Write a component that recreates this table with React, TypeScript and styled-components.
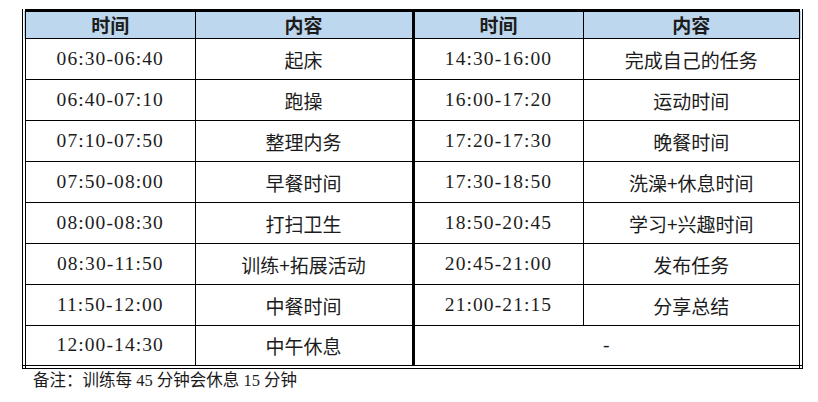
import React from 'react'
import styled, { createGlobalStyle } from 'styled-components'

type Slot = { time: string; task: string }

const morning: Slot[] = [
  { time: '06:30-06:40', task: '起床' },
  { time: '06:40-07:10', task: '跑操' },
  { time: '07:10-07:50', task: '整理内务' },
  { time: '07:50-08:00', task: '早餐时间' },
  { time: '08:00-08:30', task: '打扫卫生' },
  { time: '08:30-11:50', task: '训练+拓展活动' },
  { time: '11:50-12:00', task: '中餐时间' },
  { time: '12:00-14:30', task: '中午休息' },
]

const afternoon: Slot[] = [
  { time: '14:30-16:00', task: '完成自己的任务' },
  { time: '16:00-17:20', task: '运动时间' },
  { time: '17:20-17:30', task: '晚餐时间' },
  { time: '17:30-18:50', task: '洗澡+休息时间' },
  { time: '18:50-20:45', task: '学习+兴趣时间' },
  { time: '20:45-21:00', task: '发布任务' },
  { time: '21:00-21:15', task: '分享总结' },
]

const App = () => {
  return (
    <Page>
      <GlobalStyle />
      <Schedule>
        <colgroup>
          <col style={{ width: 171 }} />
          <col style={{ width: 218 }} />
          <col style={{ width: 170 }} />
          <col style={{ width: 218 }} />
        </colgroup>
        <thead>
          <tr>
            <HeadCell>时间</HeadCell>
            <HeadCell>内容</HeadCell>
            <HeadCell $split>时间</HeadCell>
            <HeadCell>内容</HeadCell>
          </tr>
        </thead>
        <tbody>
          {morning.map((slot, i) => {
            const other = afternoon[i]
            return (
              <Row key={slot.time}>
                <TimeCell>{slot.time}</TimeCell>
                <TaskCell>{slot.task}</TaskCell>
                {other ? (
                  <>
                    <TimeCell $split>{other.time}</TimeCell>
                    <TaskCell>{other.task}</TaskCell>
                  </>
                ) : (
                  <TimeCell $split colSpan={2}>
                    -
                  </TimeCell>
                )}
              </Row>
            )
          })}
        </tbody>
      </Schedule>
      <Note>备注：训练每 45 分钟会休息 15 分钟</Note>
    </Page>
  )
}

export default App

const GlobalStyle = createGlobalStyle`
  body {
    margin: 0;
    background: #fff;
  }
`

const Page = styled.div`
  padding: 9px 0 0 22px;
  color: #1c1c1c;
`

const Schedule = styled.table`
  width: 778px;
  table-layout: fixed;
  border-collapse: collapse;
  border: 4px double #000;
  border-top: 3px solid #000;
`

const HeadCell = styled.th<{ $split?: boolean }>`
  height: 26px;
  padding: 0;
  background: #bdd7ee;
  border: 1px solid #000;
  border-left-width: ${(p) => (p.$split ? '3px' : '1px')};
  font-family: 'Noto Sans CJK SC', sans-serif;
  font-size: 19px;
  font-weight: 700;
  line-height: 26px;
  text-align: center;
`

const Row = styled.tr`
  height: 41px;
`

const TimeCell = styled.td<{ $split?: boolean }>`
  padding: 0;
  border: 1px solid #000;
  border-left-width: ${(p) => (p.$split ? '3px' : '1px')};
  font-family: 'Liberation Serif', 'Noto Sans CJK SC', serif;
  font-size: 19.5px;
  letter-spacing: 1.1px;
  text-align: center;
  vertical-align: middle;
`

const TaskCell = styled.td`
  padding: 0;
  border: 1px solid #000;
  font-family: 'Noto Sans CJK SC', sans-serif;
  font-size: 19px;
  text-align: center;
  vertical-align: middle;
`

const Note = styled.div`
  margin-top: 1px;
  padding-left: 11px;
  font-family: 'Liberation Serif', 'Noto Sans CJK SC', serif;
  font-size: 16.5px;
  line-height: 22px;
`
